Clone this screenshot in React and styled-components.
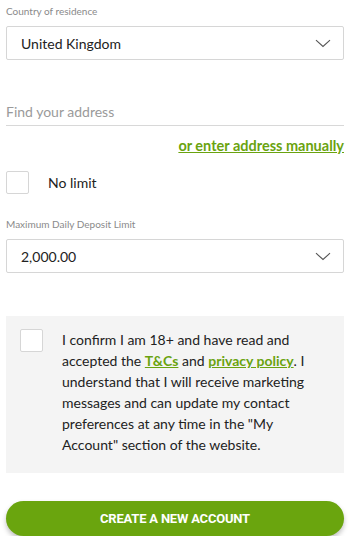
import React from "react";
import styled, { createGlobalStyle } from "styled-components";

const Global = createGlobalStyle`
  html, body { margin: 0; padding: 0; background: #fff; }
  body { font-family: Lato, "Noto Sans", Arial, sans-serif; color: #222; }
  * { box-sizing: border-box; }
`;

const Page = styled.div`
  width: 350px;
  padding: 0 6px;
  display: flex;
  flex-direction: column;
`;

const FieldLabel = styled.div`
  font-size: 10px;
  color: #8a8a8a;
  line-height: 12px;
  margin-top: ${(p) => p.$top}px;
  margin-bottom: 9px;
`;

const SelectBox = styled.div`
  height: 34px;
  border: 1px solid #d6d6d6;
  border-radius: 2px;
  display: flex;
  align-items: center;
  justify-content: space-between;
  padding: 0 12px 0 14px;
  font-size: 14px;
  color: #222;
`;

const Chevron = () => (
  <svg width="16" height="9" viewBox="0 0 16 9" fill="none">
    <path d="M1 1.2 L8 7.5 L15 1.2" stroke="#555" strokeWidth="1.1" />
  </svg>
);

const AddressInput = styled.div`
  margin-top: 42px;
  border-bottom: 1px solid #d8d8d8;
  font-size: 14px;
  color: #9a9a9a;
  padding-bottom: 3px;
  line-height: 20px;
`;

const ManualLink = styled.a`
  align-self: flex-end;
  margin-top: 11px;
  font-size: 14.5px;
  font-weight: 700;
  color: #6aa30f;
  text-decoration: underline;
  line-height: 18px;
`;

const CheckRow = styled.label`
  display: flex;
  align-items: center;
  gap: 19px;
  margin-top: ${(p) => p.$top || 0}px;
  font-size: 14px;
  color: #222;
`;

const Box = styled.span`
  width: 23px;
  height: 23px;
  flex: none;
  border: 1px solid #d6d6d6;
  border-radius: 2px;
  background: #fff;
`;

const ConsentPanel = styled.div`
  margin-top: 43px;
  background: #f4f4f4;
  padding: 13px 20px 18px 14px;
  display: flex;
  align-items: flex-start;
  gap: 19px;
`;

const ConsentText = styled.p`
  margin: 0;
  font-size: 14px;
  line-height: 21px;
  color: #222;
`;

const InlineLink = styled.a`
  color: #6aa30f;
  font-weight: 700;
  text-decoration: underline;
`;

const CreateButton = styled.button`
  margin-top: 28px;
  height: 35px;
  border: none;
  border-radius: 18px;
  background: #6aa50e;
  color: #fff;
  font-family: Roboto, Arial, sans-serif;
  font-weight: 700;
  font-size: 13px;
  letter-spacing: -0.2px;
  box-shadow: 0 3px 5px rgba(0, 0, 0, 0.25);
`;

export default function App() {
  return (
    <>
      <Global />
      <Page>
        <FieldLabel $top={5}>Country of residence</FieldLabel>
        <SelectBox>
          United Kingdom
          <Chevron />
        </SelectBox>
        <AddressInput>Find your address</AddressInput>
        <ManualLink>or enter address manually</ManualLink>
        <CheckRow $top={16}>
          <Box />
          No limit
        </CheckRow>
        <FieldLabel $top={24}>Maximum Daily Deposit Limit</FieldLabel>
        <SelectBox>
          2,000.00
          <Chevron />
        </SelectBox>
        <ConsentPanel>
          <Box />
          <ConsentText>
            I confirm I am 18+ and have read and accepted the{" "}
            <InlineLink>T&amp;Cs</InlineLink> and{" "}
            <InlineLink>privacy policy</InlineLink>. I understand that I will
            receive marketing messages and can update my contact preferences
            at any time in the "My Account" section of the website.
          </ConsentText>
        </ConsentPanel>
        <CreateButton>CREATE A NEW ACCOUNT</CreateButton>
      </Page>
    </>
  );
}
